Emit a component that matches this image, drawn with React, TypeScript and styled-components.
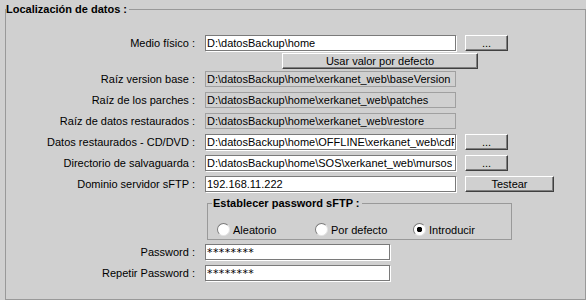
import React from 'react'
import styled, { createGlobalStyle } from 'styled-components'

const FONT = '"Liberation Sans", Arial, sans-serif'

const paths = [
    { label: 'Raíz version base :', value: 'D:\\datosBackup\\home\\xerkanet_web\\baseVersion', top: 2 },
    { label: 'Raíz de los parches :', value: 'D:\\datosBackup\\home\\xerkanet_web\\patches', top: 5 },
    { label: 'Raíz de datos restaurados :', value: 'D:\\datosBackup\\home\\xerkanet_web\\restore', top: 5 },
]

const App = () => {
    return (
        <>
            <GlobalStyle />
            <Group>
                <Legend>Localización de datos :</Legend>
                <Body>
                    <Row $top={19}>
                        <Label>Medio físico :</Label>
                        <Field defaultValue={'D:\\datosBackup\\home'} />
                        <Button $width={43}>...</Button>
                    </Row>
                    <Row $top={2}>
                        <Button $width={196} $offset={276}>Usar valor por defecto</Button>
                    </Row>
                    {paths.map(p => (
                        <Row $top={p.top} key={p.label}>
                            <Label>{p.label}</Label>
                            <Field $disabled readOnly value={p.value} />
                        </Row>
                    ))}
                    <Row $top={5}>
                        <Label>Datos restaurados - CD/DVD :</Label>
                        <Field defaultValue={'D:\\datosBackup\\home\\OFFLINE\\xerkanet_web\\cdRom'} />
                        <Button $width={43}>...</Button>
                    </Row>
                    <Row $top={5}>
                        <Label>Directorio de salvaguarda :</Label>
                        <Field defaultValue={'D:\\datosBackup\\home\\SOS\\xerkanet_web\\mursos'} />
                        <Button $width={43}>...</Button>
                    </Row>
                    <Row $top={5}>
                        <Label>Dominio servidor sFTP :</Label>
                        <Field defaultValue="192.168.11.222" />
                        <Button $width={89}>Testear</Button>
                    </Row>
                    <SubGroup>
                        <Legend $inner>Establecer password sFTP :</Legend>
                        <RadioRow>
                            <Option><Radio name="pwd" />Aleatorio</Option>
                            <Option><Radio name="pwd" />Por defecto</Option>
                            <Option><Radio name="pwd" defaultChecked />Introducir</Option>
                        </RadioRow>
                    </SubGroup>
                    <Row $top={4}>
                        <Label>Password :</Label>
                        <Field $width={185} $secret defaultValue="********" />
                    </Row>
                    <Row $top={5}>
                        <Label>Repetir Password :</Label>
                        <Field $width={185} $secret defaultValue="********" />
                    </Row>
                </Body>
            </Group>
        </>
    )
}

export default App

const GlobalStyle = createGlobalStyle`
    html, body {
        margin: 0;
        padding: 0;
        background: #d0d0d0;
    }
    body {
        width: 586px;
        height: 300px;
        overflow: hidden;
        font-family: ${FONT};
        font-size: 11px;
        color: #000;
    }
`

const Group = styled.fieldset`
    box-sizing: border-box;
    margin: 3px 0 0 5px;
    padding: 0;
    min-width: 0;
    border: 1px solid #999;
`

const SubGroup = styled.fieldset`
    box-sizing: border-box;
    width: 305px;
    margin: 5px 0 0 201px;
    padding: 0;
    min-width: 0;
    border: 1px solid #999;
`

const Legend = styled.legend<{ $inner?: boolean }>`
    margin-left: ${p => p.$inner ? '4px' : '0'};
    padding: 0 2px 0 ${p => p.$inner ? '1px' : '0'};
    font-weight: bold;
    font-size: 11px;
    line-height: 13px;
`

const Body = styled.div`
    padding: 0 0 18px 0;
`

const Row = styled.div<{ $top: number }>`
    display: flex;
    align-items: center;
    height: 16px;
    margin-top: ${p => p.$top}px;
`

const Label = styled.label`
    width: 189px;
    margin-right: 10px;
    text-align: right;
    white-space: nowrap;
    line-height: 16px;
`

const Field = styled.input<{ $disabled?: boolean; $width?: number; $secret?: boolean }>`
    box-sizing: border-box;
    width: ${p => p.$width ?? 251}px;
    height: 16px;
    margin: 0;
    padding: 0 1px;
    font: 11px ${p => p.$secret ? '"DejaVu Sans", sans-serif' : FONT};
    letter-spacing: ${p => p.$secret ? '0.4px' : 'normal'};
    color: #000;
    background: ${p => p.$disabled ? '#d0d0d0' : '#fff'};
    border: 1px solid ${p => p.$disabled ? '#a0a0a0' : '#7a7a7a'};
    box-shadow: ${p => p.$disabled ? 'none' : '1px 1px 0 #fff'};
    outline: none;
`

const Button = styled.button<{ $width: number; $offset?: number }>`
    box-sizing: border-box;
    width: ${p => p.$width}px;
    height: 16px;
    margin: 0 0 0 ${p => p.$offset ?? 9}px;
    padding: 0;
    font: 11px ${FONT};
    line-height: 13px;
    color: #000;
    background: #d0d0d0;
    border: 1px solid;
    border-color: #fff #404040 #404040 #fff;
    box-shadow: inset -1px -1px 0 #808080;
`

const RadioRow = styled.div`
    display: flex;
    padding: 13px 0 3px 9px;
`

const Option = styled.label`
    display: flex;
    align-items: center;
    gap: 3px;
    width: 99px;
    height: 13px;
`

const Radio = styled.input.attrs({ type: 'radio' })`
    appearance: none;
    box-sizing: border-box;
    width: 13px;
    height: 13px;
    margin: 0;
    border-radius: 50%;
    border: 1px solid;
    border-color: #7a7a7a #e4e4e4 #e4e4e4 #7a7a7a;
    background: #fff;
    &:checked {
        background: radial-gradient(circle, #000 0 2.5px, #fff 3px);
    }
`
